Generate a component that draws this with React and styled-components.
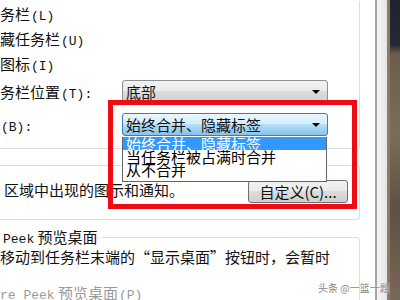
import React from 'react';
import styled, { createGlobalStyle } from 'styled-components';

const GlobalStyle = createGlobalStyle`
  html, body {
    margin: 0;
    padding: 0;
    background: #ffffff;
  }
  body {
    font-family: "Noto Sans CJK SC", "Noto Sans", sans-serif;
    color: #111;
  }
`;

const Screen = styled.div`
  position: relative;
  width: 400px;
  height: 300px;
  overflow: hidden;
  display: flex;
  background: #ffffff;
`;

const Page = styled.div`
  width: 375px;
  flex-shrink: 0;
  padding-right: 15px;
  box-sizing: border-box;
  background: #ffffff;
  font-size: 15px;
`;

const Frame = styled.div`
  width: 10px;
  flex-shrink: 0;
  border-left: 2px solid #a4a4a4;
  border-right: 3px solid #8f7a64;
  background: linear-gradient(90deg, #f4f4f4, #e6e6e6);
`;

const Desktop = styled.div`
  flex: 1;
  background: linear-gradient(180deg, #1d2430 0%, #232a33 15%, #6d5d4f 18%, #7d6b5a 45%, #5e5044 70%, #7a6858 100%);
`;

const Group = styled.div`
  position: relative;
  border-right: 1px solid #d5dfe5;
  border-bottom: 1px solid #d5dfe5;
  border-bottom-right-radius: 4px;
  padding-bottom: ${(p) => p.$bottom || 0}px;
  margin-top: ${(p) => p.$top || 0}px;
  border-top: ${(p) => (p.$framed ? '1px solid #d5dfe5' : 'none')};
  border-top-right-radius: ${(p) => (p.$framed ? '4px' : '0')};
`;

const CheckRow = styled.div`
  height: 25px;
  line-height: 25px;
  white-space: nowrap;
  &:first-child {
    margin-top: 1px;
  }
`;

const FieldRow = styled.div`
  display: flex;
  align-items: center;
  margin-top: ${(p) => p.$top}px;
  height: 23px;
`;

const Label = styled.div`
  width: 122px;
  flex-shrink: 0;
  white-space: nowrap;
`;

const Key = styled.span`
  font-family: "Liberation Mono", "DejaVu Sans Mono", monospace;
  font-size: 13px;
  margin-left: 1px;
`;

const ComboWrap = styled.div`
  position: relative;
  width: 206px;
  height: 23px;
`;

const Combo = styled.div`
  box-sizing: border-box;
  height: 23px;
  border: 1px solid ${(p) => (p.$open ? '#3c7fb1' : '#8e8f8f')};
  border-radius: 3px;
  padding-left: 3px;
  line-height: 21px;
  white-space: nowrap;
  background: ${(p) =>
    p.$open
      ? 'linear-gradient(180deg, #eaf6fd 0%, #d5eefc 45%, #b4defa 50%, #86c2ec 100%)'
      : 'linear-gradient(180deg, #f2f2f2 0%, #ebebeb 45%, #dddddd 50%, #cfcfcf 100%)'};
  display: flex;
  align-items: center;
  justify-content: space-between;
`;

const Arrow = styled.span`
  width: 0;
  height: 0;
  margin-right: 7px;
  border-left: 4px solid transparent;
  border-right: 4px solid transparent;
  border-top: 4px solid #000;
`;

const DropList = styled.div`
  position: absolute;
  top: 24px;
  left: 0;
  width: 205px;
  box-sizing: border-box;
  border: 1px solid #646464;
  border-top: none;
  background: #ffffff;
  padding-bottom: 5px;
  z-index: 2;
`;

const Option = styled.div`
  height: 13px;
  line-height: 13px;
  padding-left: 3px;
  white-space: nowrap;
  background: ${(p) => (p.$active ? '#3399ff' : 'transparent')};
  color: ${(p) => (p.$active ? '#ffffff' : '#000000')};
`;

const NoticeRow = styled.div`
  display: flex;
  align-items: center;
  justify-content: space-between;
  padding: 14px 11px 0 4px;
`;

const NoticeText = styled.span`
  white-space: nowrap;
  margin-top: -5px;
`;

const Button = styled.button`
  width: 100px;
  height: 23px;
  padding: 0;
  border: 1px solid #707070;
  border-radius: 3px;
  font-family: inherit;
  font-size: 15px;
  color: #111;
  line-height: 21px;
  background: linear-gradient(180deg, #f2f2f2 0%, #ebebeb 45%, #dddddd 50%, #cfcfcf 100%);
`;

const Legend = styled.div`
  width: fit-content;
  margin-top: -11px;
  padding: 0 4px 0 3px;
  background: #ffffff;
  height: 19px;
  line-height: 19px;
  white-space: nowrap;
`;

const Mono = styled.span`
  font-family: "Liberation Mono", "DejaVu Sans Mono", monospace;
  font-size: 13px;
`;

const Desc = styled.div`
  height: 19px;
  line-height: 19px;
  margin-top: 1px;
  white-space: nowrap;
`;

const Spacer = styled.div`
  height: 17px;
`;

const Disabled = styled.div`
  color: #9a9a9a;
  height: 19px;
  line-height: 19px;
  white-space: nowrap;
`;

const Highlight = styled.div`
  position: absolute;
  left: 108px;
  top: 100px;
  width: 249px;
  height: 109px;
  box-sizing: border-box;
  border: 5px solid #f00a14;
  z-index: 3;
  pointer-events: none;
`;

const Watermark = styled.div`
  position: absolute;
  left: 318px;
  top: 280px;
  font-size: 10px;
  color: #858585;
  white-space: nowrap;
  text-shadow: 0 0 2px #ffffff;
  z-index: 4;
`;

export default function App() {
  return (
    <>
      <GlobalStyle />
      <Screen>
        <Page>
          <Group $bottom={12}>
            <CheckRow>务栏<Key>(L)</Key></CheckRow>
            <CheckRow>藏任务栏<Key>(U)</Key></CheckRow>
            <CheckRow>图标<Key>(I)</Key></CheckRow>
            <FieldRow $top={4}>
              <Label>务栏位置<Key>(T):</Key></Label>
              <ComboWrap>
                <Combo>
                  <span>底部</span>
                  <Arrow />
                </Combo>
              </ComboWrap>
            </FieldRow>
            <FieldRow $top={10}>
              <Label><Key>(B):</Key></Label>
              <ComboWrap>
                <Combo $open>
                  <span>始终合并、隐藏标签</span>
                  <Arrow />
                </Combo>
                <DropList>
                  <Option $active>始终合并、隐藏标签</Option>
                  <Option>当任务栏被占满时合并</Option>
                  <Option>从不合并</Option>
                </DropList>
              </ComboWrap>
            </FieldRow>
          </Group>

          <Group $framed $top={16} $bottom={16}>
            <NoticeRow>
              <NoticeText>区域中出现的图示和通知。</NoticeText>
              <Button>自定义(C)...</Button>
            </NoticeRow>
          </Group>

          <Group $framed $top={17}>
            <Legend>
              <Mono>Peek</Mono> 预览桌面
            </Legend>
            <Desc>移动到任务栏末端的“显示桌面”按钮时，会暂时</Desc>
            <Spacer />
            <Disabled>
              <Mono>re Peek</Mono> 预览桌面<Key>(P)</Key>
            </Disabled>
          </Group>
        </Page>
        <Frame />
        <Desktop />
        <Highlight />
        <Watermark>头条 @一篮一题</Watermark>
      </Screen>
    </>
  );
}
